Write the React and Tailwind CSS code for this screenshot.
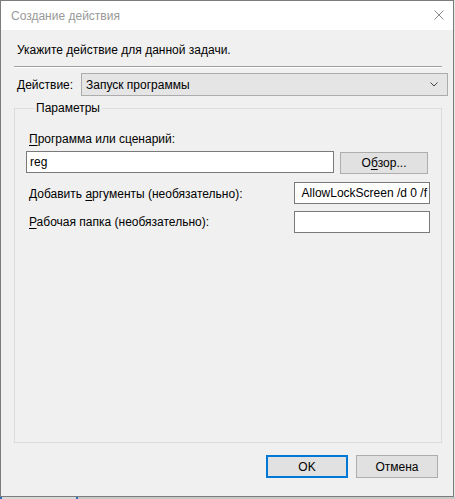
import React from "react";

const font = { fontFamily: '"Liberation Sans", "Noto Sans", sans-serif' };

function Mn({ children }) {
  return <span className="underline decoration-1 underline-offset-2">{children}</span>;
}

function Field({ className = "", children }) {
  return (
    <div
      className={
        "h-[22px] border border-[#7a7a7a] bg-white flex items-center overflow-hidden whitespace-nowrap " +
        className
      }
    >
      {children}
    </div>
  );
}

function Button({ className = "", children }) {
  return (
    <button
      type="button"
      className={
        "flex items-center justify-center bg-[#e1e1e1] text-[12px] leading-[16px] text-black " + className
      }
    >
      {children}
    </button>
  );
}

export default function App() {
  return (
    <div className="w-[455px] h-[499px] bg-[#e6e6e6] flex flex-col" style={font}>
      <div className="w-[454px] h-[497px] border border-[#7c7c7c] flex flex-col">
        {/* title bar */}
        <div className="h-[29px] shrink-0 bg-white flex items-center justify-between pl-[10px] pr-[9px]">
          <span className="text-[12px] leading-[16px] text-[#999999]">Создание действия</span>
          <svg width="10" height="10" viewBox="0 0 10 10" className="mt-[-2px]">
            <path d="M0.5 0.5 L9.5 9.5 M9.5 0.5 L0.5 9.5" stroke="#8a8a8a" strokeWidth="1" fill="none" />
          </svg>
        </div>

        <div className="flex-1 bg-[#f0f0f0] flex flex-col text-black">
          <p className="mt-[12px] ml-[16px] text-[12px] leading-[16px]">Укажите действие для данной задачи.</p>

          <div className="mt-[8px] ml-[13px] w-[428px] h-0 border-t border-b border-t-[#a0a0a0] border-b-white" />

          {/* action picker */}
          <div className="mt-[5px] flex items-center h-[23px]">
            <span className="ml-[16px] w-[64px] text-[12px] leading-[16px]">
              <Mn>Д</Mn>ействие:
            </span>
            <div className="w-[367px] h-[23px] border border-[#acacac] bg-[#e5e5e5] flex items-center justify-between pl-[4px] pr-[9px]">
              <span className="text-[12px] leading-[16px]">Запуск программы</span>
              <svg width="8" height="5" viewBox="0 0 8 5">
                <path d="M0.5 0.5 L4 4 L7.5 0.5" stroke="#444" strokeWidth="1" fill="none" />
              </svg>
            </div>
          </div>

          {/* parameters group */}
          <fieldset className="mt-[4px] ml-[13px] w-[428px] h-[343px] border border-[#dcdcdc] pl-[14px]">
            <legend className="ml-[5px] px-[2px] text-[12px] leading-[16px]">Параметры</legend>

            <p className="mt-[15px] text-[12px] leading-[16px]">
              <Mn>П</Mn>рограмма или сценарий:
            </p>

            <div className="mt-[4px] flex items-start">
              <Field className="ml-[-3px] w-[308px] pl-[3px]">
                <span className="text-[12px] leading-[16px]">reg</span>
              </Field>
              <Button className="ml-[6px] mt-[1px] w-[88px] h-[22px] border border-[#adadad]">
                О<Mn>б</Mn>зор...
              </Button>
            </div>

            <div className="mt-[8px] flex items-start">
              <span className="mt-[4px] w-[265px] text-[12px] leading-[16px]">
                Добавить <Mn>а</Mn>ргументы (необязательно):
              </span>
              <Field className="w-[136px] justify-end pr-[2px]">
                <span className="text-[12px] leading-[16px]">AllowLockScreen /d 0 /f</span>
              </Field>
            </div>

            <div className="mt-[7px] flex items-start">
              <span className="mt-[3px] w-[265px] text-[12px] leading-[16px]">
                <Mn>Р</Mn>абочая папка (необязательно):
              </span>
              <Field className="w-[136px]" />
            </div>
          </fieldset>

          {/* dialog buttons */}
          <div className="mt-[12px] flex justify-end gap-[8px] pr-[15px]">
            <Button className="w-[82px] h-[23px] border-2 border-[#0078d7]">OK</Button>
            <Button className="w-[82px] h-[23px] border border-[#adadad]">Отмена</Button>
          </div>
        </div>
      </div>
      <div className="h-[2px] flex">
        <div className="w-[2px] bg-[#2a6fc0]" />
        <div className="w-[74px] bg-[#d8d8d8]" />
        <div className="w-[2px] bg-[#2a6fc0]" />
        <div className="flex-1 bg-[#c8c8c8]" />
      </div>
    </div>
  );
}
